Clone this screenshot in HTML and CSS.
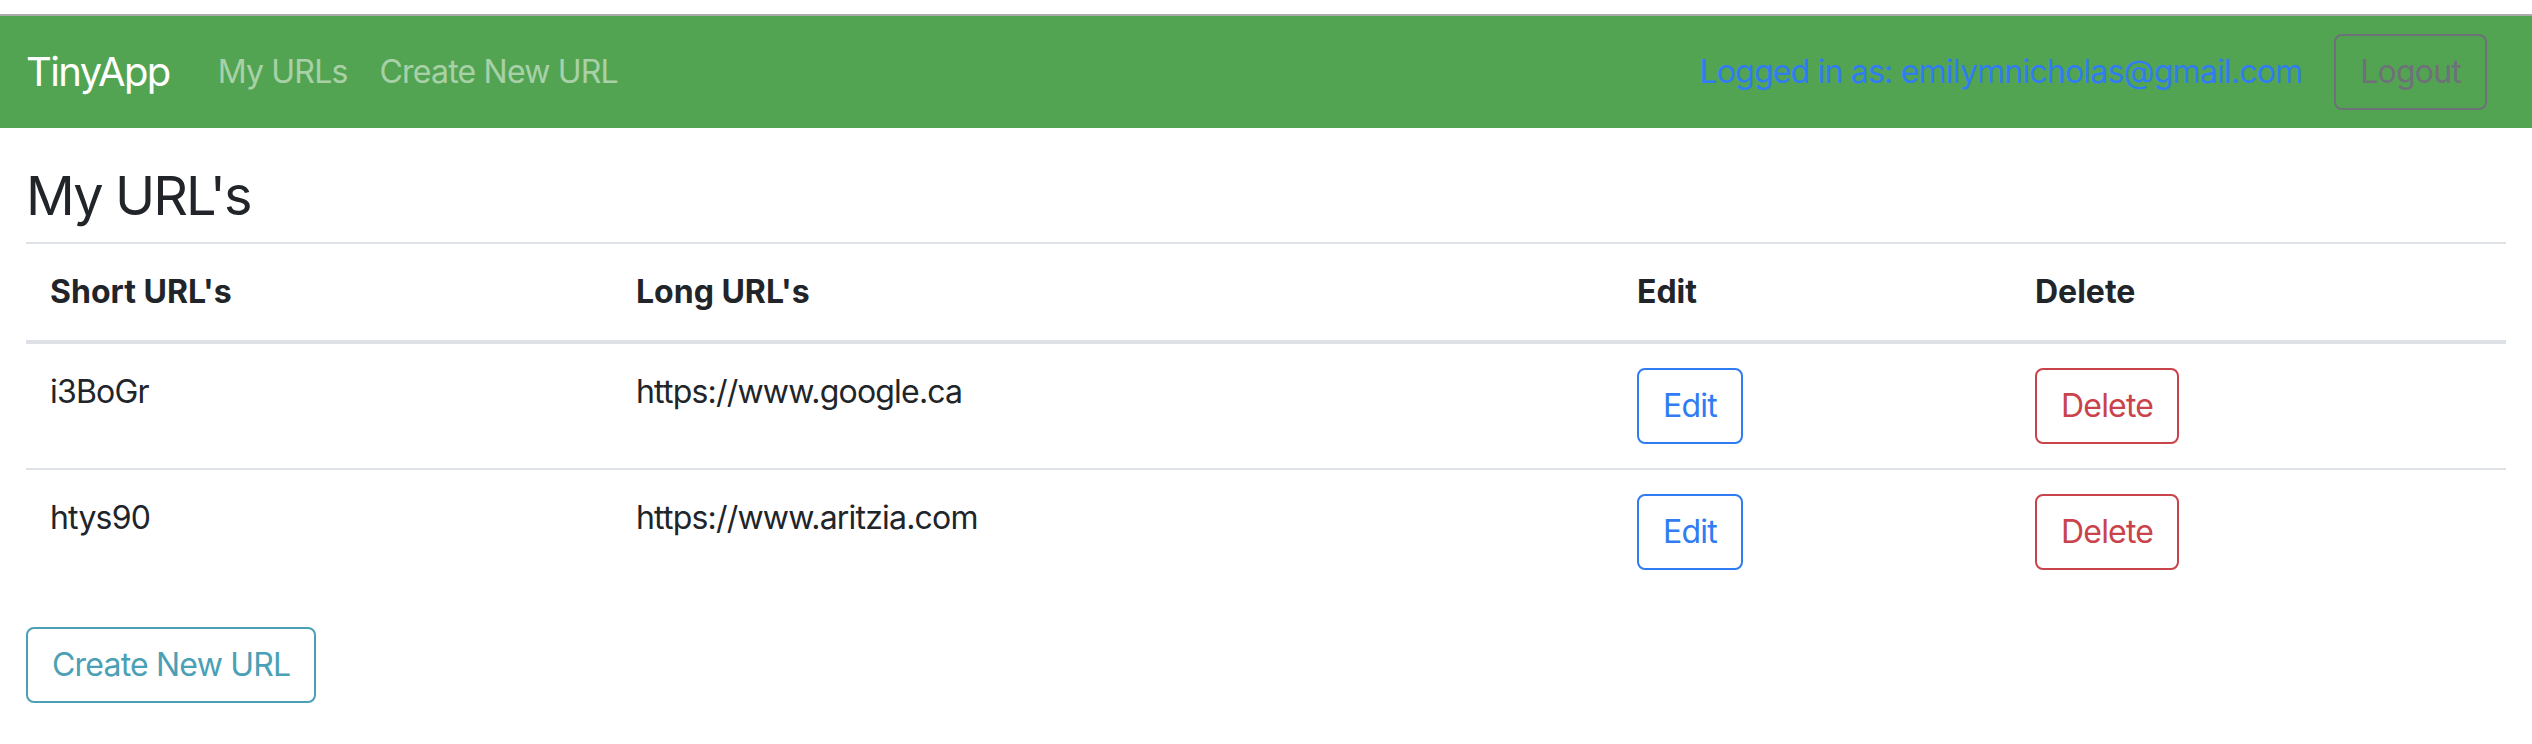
FILE: index.html
```html
<!DOCTYPE html>
<html lang="en">
<head>
<meta charset="utf-8">
<title>TinyApp</title>
<link rel="stylesheet" href="styles.css">
</head>
<body>
<div class="page">
  <nav class="navbar">
    <a class="brand" href="#">TinyApp</a>
    <div class="nav-links">
      <a class="nav-link" href="#">My URLs</a>
      <a class="nav-link" href="#">Create New URL</a>
    </div>
    <div class="nav-right">
      <span class="logged">Logged in as: emilymnicholas@gmail.com</span>
      <button class="btn btn-logout" type="button">Logout</button>
    </div>
  </nav>
  <main class="content">
    <h1 class="title">My URL's</h1>
    <table class="urls">
      <colgroup>
        <col class="col-short">
        <col class="col-long">
        <col class="col-edit">
        <col class="col-delete">
      </colgroup>
      <thead>
        <tr><th>Short URL's</th><th>Long URL's</th><th>Edit</th><th>Delete</th></tr>
      </thead>
      <tbody>
        <tr>
          <td>i3BoGr</td>
          <td>https://www.google.ca</td>
          <td><a class="btn btn-edit" href="#">Edit</a></td>
          <td><button class="btn btn-delete" type="button">Delete</button></td>
        </tr>
        <tr>
          <td>htys90</td>
          <td>https://www.aritzia.com</td>
          <td><a class="btn btn-edit" href="#">Edit</a></td>
          <td><button class="btn btn-delete" type="button">Delete</button></td>
        </tr>
      </tbody>
    </table>
    <a class="btn btn-create" href="#">Create New URL</a>
  </main>
</div>
</body>
</html>
```
FILE: styles.css
```css
* { box-sizing: border-box; }
html, body { margin: 0; padding: 0; background: #fff; }
body {
  font-family: Inter, "Noto Sans", "Liberation Sans", sans-serif;
  color: #212529;
  font-size: 32px;
  line-height: 48px;
  letter-spacing: -0.025em;
}
a { text-decoration: none; }
.page { padding-top: 14px; }

.navbar {
  border-top: 2px solid #a9aaa9;
  background: #53a452;
  height: 114px;
  display: flex;
  align-items: center;
  padding: 0 45px 0 26px;
}
.brand {
  font-size: 40px;
  line-height: 60px;
  letter-spacing: -0.04em;
  color: #fff;
  margin-right: 32px;
}
.nav-links { display: flex; }
.nav-link {
  color: rgba(255, 255, 255, 0.5);
  padding: 0 16px;
}
.nav-right {
  margin-left: auto;
  display: flex;
  align-items: center;
  gap: 32px;
}
.logged { color: #2f7cf3; }

.btn {
  display: inline-block;
  font-family: inherit;
  font-size: 32px;
  line-height: 48px;
  letter-spacing: -0.025em;
  padding: 12px 24px;
  border: 2px solid;
  border-radius: 8px;
  background: transparent;
  margin: 0;
  cursor: pointer;
}
.btn-logout { color: #6e7179; border-color: #6e7179; }
.btn-edit { color: #2f7cf3; border-color: #2f7cf3; }
.btn-delete { color: #c9434b; border-color: #c9434b; }
.btn-create { color: #4aa0b5; border-color: #4aa0b5; }

.content { padding: 0 26px; }
.title {
  font-size: 54px;
  font-weight: 400;
  line-height: 65px;
  letter-spacing: -0.035em;
  margin: 35px 0 14px;
}

.urls {
  width: 100%;
  border-collapse: collapse;
  table-layout: fixed;
  margin-bottom: 33px;
}
.col-short { width: 586px; }
.col-long { width: 1001px; }
.col-edit { width: 398px; }
.col-delete { width: 495px; }
.urls th, .urls td {
  padding: 24px;
  text-align: left;
  vertical-align: top;
}
.urls th {
  font-weight: 700;
  letter-spacing: 0;
  border-top: 2px solid #dee2e6;
  border-bottom: 4px solid #dee2e6;
}
.urls tbody tr + tr td { border-top: 2px solid #dee2e6; }
```
